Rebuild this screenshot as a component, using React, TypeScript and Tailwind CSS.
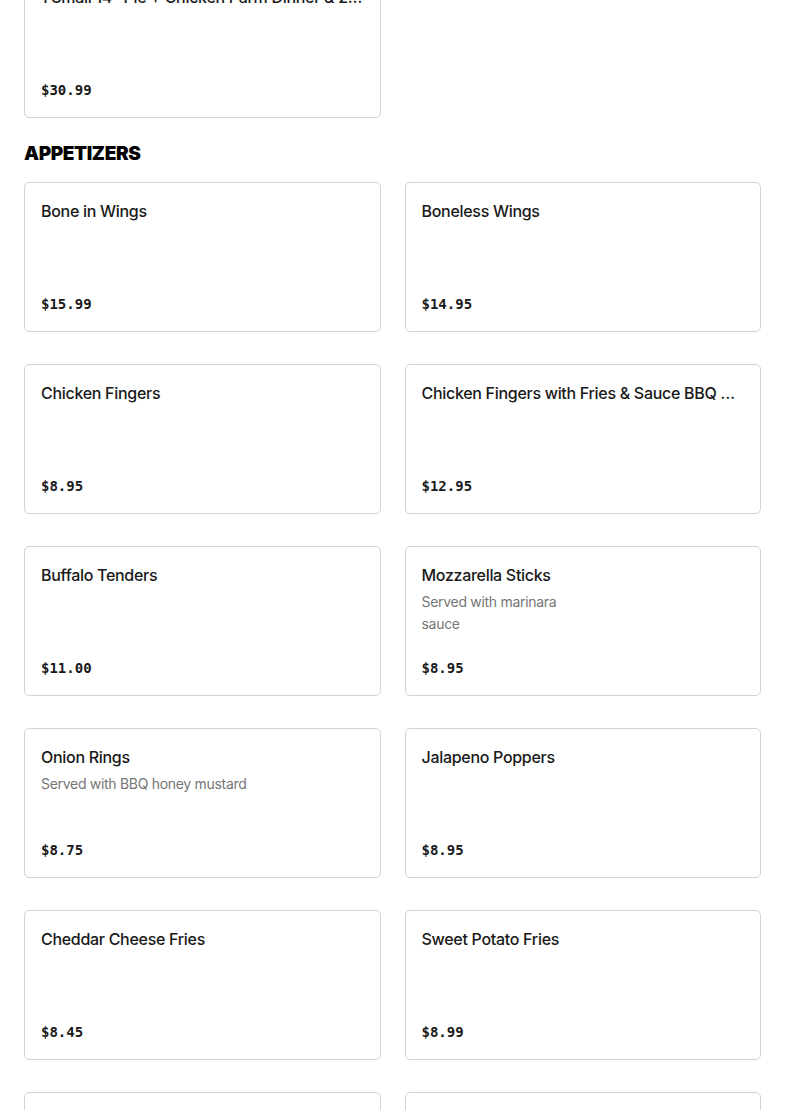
type Item = {
  name: string;
  price: string;
  description?: string[];
};

const appetizers: Item[] = [
  { name: "Bone in Wings", price: "$15.99" },
  { name: "Boneless Wings", price: "$14.95" },
  { name: "Chicken Fingers", price: "$8.95" },
  { name: "Chicken Fingers with Fries & Sauce BBQ Honey Mustard", price: "$12.95" },
  { name: "Buffalo Tenders", price: "$11.00" },
  { name: "Mozzarella Sticks", price: "$8.95", description: ["Served with marinara", "sauce"] },
  { name: "Onion Rings", price: "$8.75", description: ["Served with BBQ honey mustard"] },
  { name: "Jalapeno Poppers", price: "$8.95" },
  { name: "Cheddar Cheese Fries", price: "$8.45" },
  { name: "Sweet Potato Fries", price: "$8.99" },
  { name: "Garlic Bread", price: "$5.99" },
  { name: "Garlic Bread with Cheese", price: "$7.99" },
];

const MenuCard = ({ name, price, description }: Item) => (
  <div className="flex h-[150px] flex-col rounded-[5px] border border-[#d3d3d3] bg-white p-4">
    <h3 className="truncate text-[16px] leading-6 font-medium tracking-[-0.3px] text-[#191919]">
      {name}
    </h3>
    {description && (
      <p className="mt-1 text-[14px] leading-[22px] tracking-[-0.3px] text-[#767676]">
        {description.map((line, i) => (
          <span key={i} className="block">
            {line}
          </span>
        ))}
      </p>
    )}
    <p className="mt-auto font-['DejaVu_Sans_Mono',monospace] text-[14px] leading-[22px] font-bold text-[#191919]">
      {price}
    </p>
  </div>
);

export default function App() {
  return (
    <div className="min-h-screen overflow-hidden bg-white font-['Inter',sans-serif]">
      <div className="-mt-8 px-6">
        <div className="grid grid-cols-2 gap-x-6 gap-y-8">
          <MenuCard name={'1 Small 14" Pie + Chicken Parm Dinner & 2 Liter Soda'} price="$30.99" />
        </div>
        <h2 className="mt-[22px] mb-[14px] text-[19px] leading-7 font-black tracking-[-0.4px] text-black">
          APPETIZERS
        </h2>
        <div className="grid grid-cols-2 gap-x-6 gap-y-8">
          {appetizers.map((item) => (
            <MenuCard key={item.name} {...item} />
          ))}
        </div>
      </div>
    </div>
  );
}
